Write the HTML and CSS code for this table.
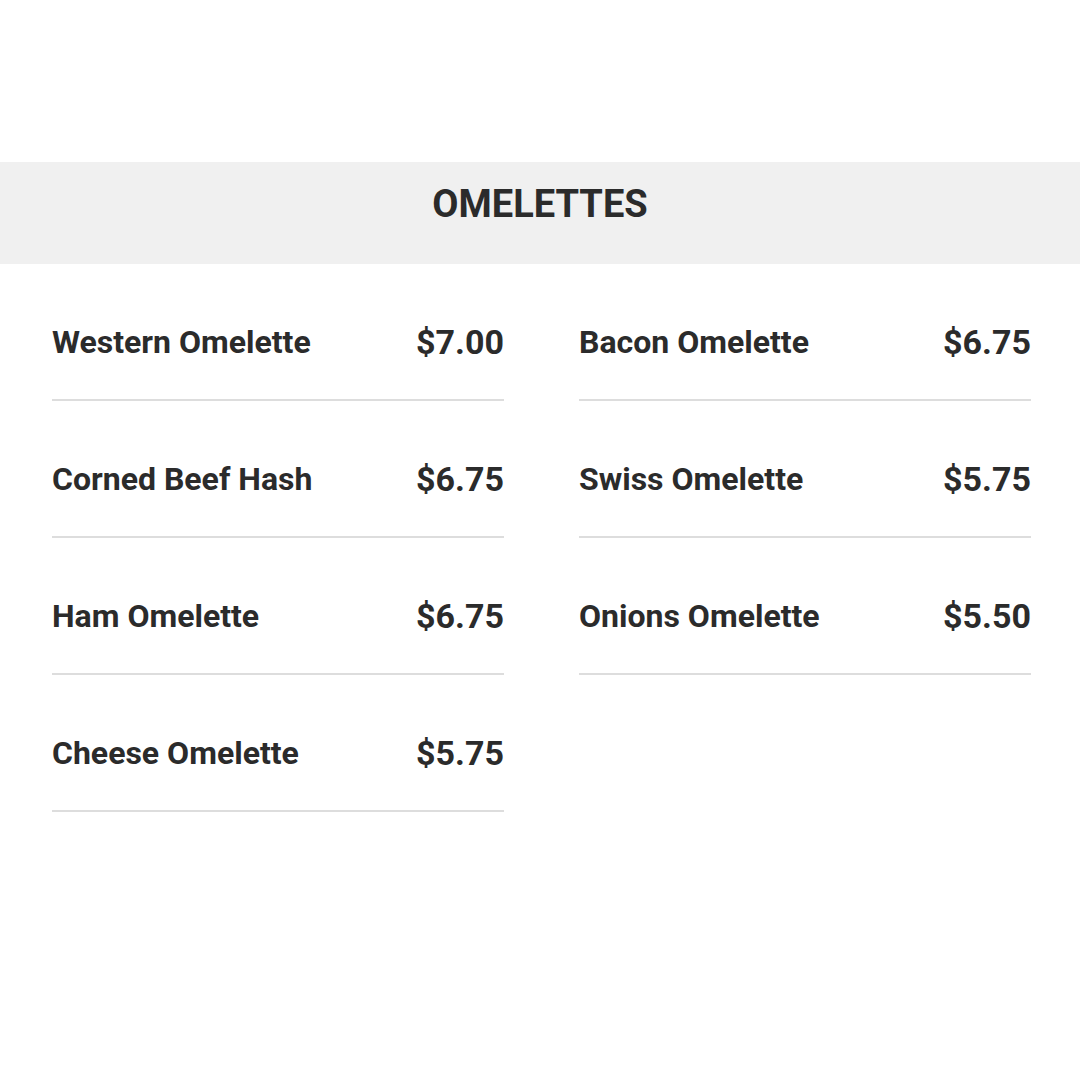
FILE: index.html
```html
<!DOCTYPE html>
<html lang="en">
<head>
<meta charset="utf-8">
<title>Omelettes</title>
<link rel="stylesheet" href="styles.css">
</head>
<body>
<section class="menu">
  <header class="menu-head">
    <h2 class="menu-title">OMELETTES</h2>
  </header>
  <div class="menu-grid">
    <div class="menu-col">
      <div class="item"><span class="name">Western Omelette</span><span class="price">$7.00</span></div>
      <div class="item"><span class="name">Corned Beef Hash</span><span class="price">$6.75</span></div>
      <div class="item"><span class="name">Ham Omelette</span><span class="price">$6.75</span></div>
      <div class="item"><span class="name">Cheese Omelette</span><span class="price">$5.75</span></div>
    </div>
    <div class="menu-col">
      <div class="item"><span class="name">Bacon Omelette</span><span class="price">$6.75</span></div>
      <div class="item"><span class="name">Swiss Omelette</span><span class="price">$5.75</span></div>
      <div class="item"><span class="name">Onions Omelette</span><span class="price">$5.50</span></div>
    </div>
  </div>
</section>
</body>
</html>
```

FILE: styles.css
```css
* { box-sizing: border-box; }
html, body {
  margin: 0;
  padding: 0;
  background: #ffffff;
  width: 1080px;
  height: 1080px;
  font-family: Roboto, "Liberation Sans", Arial, sans-serif;
  color: #2b2b2b;
}
.menu {
  padding-top: 162px;
}
.menu-head {
  background: #f0f0f0;
  height: 102px;
  padding-bottom: 18px;
  display: flex;
  align-items: center;
  justify-content: center;
}
.menu-title {
  margin: 0;
  font-size: 38px;
  font-weight: 700;
  line-height: 1;
  letter-spacing: 0;
}
.menu-grid {
  display: grid;
  grid-template-columns: 452px 452px;
  column-gap: 75px;
  padding-left: 52px;
}
.menu-col {
  display: flex;
  flex-direction: column;
}
.item {
  display: flex;
  justify-content: space-between;
  align-items: center;
  height: 137px;
  padding-top: 58px;
  padding-bottom: 37px;
  border-bottom: 2px solid #dddddd;
}
.name {
  font-size: 32px;
  font-weight: 700;
  line-height: 40px;
}
.price {
  font-size: 34px;
  font-weight: 700;
  line-height: 40px;
}
```
